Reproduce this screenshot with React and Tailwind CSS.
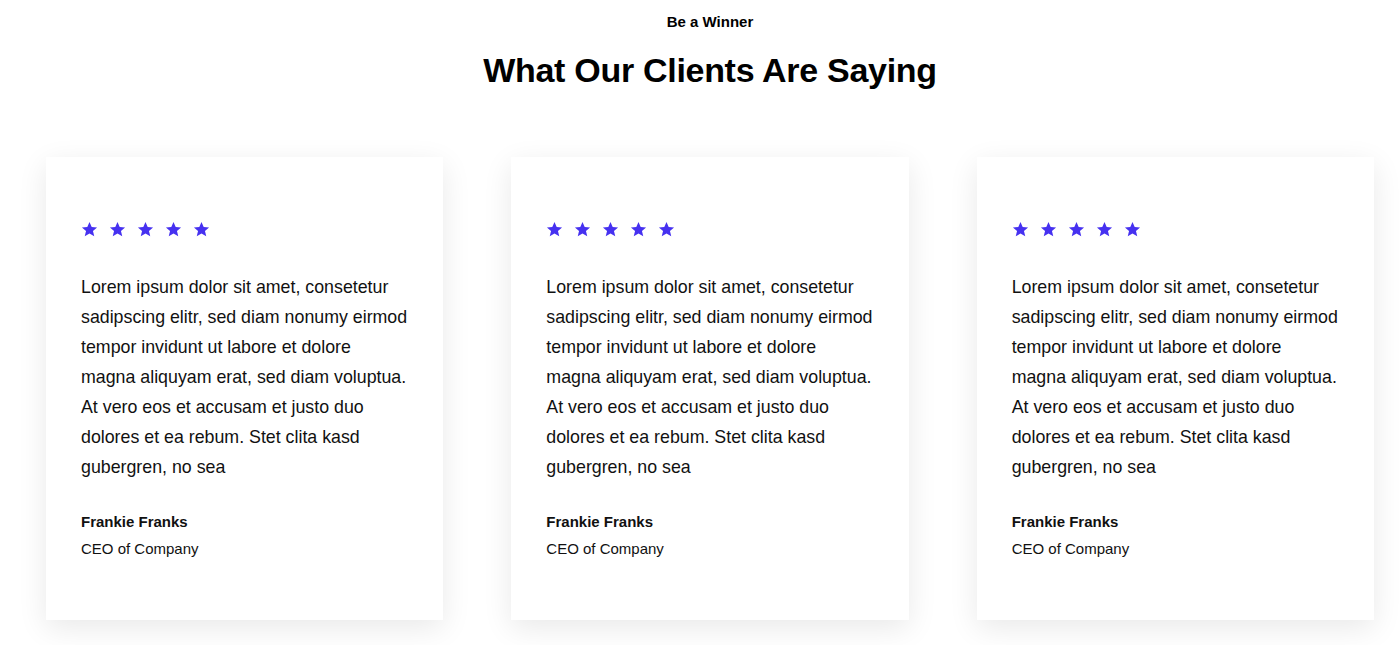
import React from "react";

const lines = [
  "Lorem ipsum dolor sit amet, consetetur",
  "sadipscing elitr, sed diam nonumy eirmod",
  "tempor invidunt ut labore et dolore",
  "magna aliquyam erat, sed diam voluptua.",
  "At vero eos et accusam et justo duo",
  "dolores et ea rebum. Stet clita kasd",
  "gubergren, no sea",
];

function Star() {
  return (
    <svg width="17" height="17" viewBox="0 0 24 24" className="text-[#4631f0]" fill="currentColor">
      <path d="M12 1.5l3.1 7.1 7.6.6-5.8 5 1.8 7.5L12 17.7l-6.7 4 1.8-7.5-5.8-5 7.6-.6z" />
    </svg>
  );
}

function Card() {
  return (
    <div className="bg-white shadow-[0_8px_28px_rgba(0,0,0,0.09)] pl-[35px] pr-[20px] pt-[64px] pb-[61px]">
      <div className="flex gap-[11px]">
        {[0, 1, 2, 3, 4].map((i) => (
          <Star key={i} />
        ))}
      </div>
      <p className="mt-[34px] text-[17.8px] leading-[30px] text-[#111] whitespace-nowrap">
        {lines.map((l, i) => (
          <React.Fragment key={i}>
            {l}
            {i < lines.length - 1 && <br />}
          </React.Fragment>
        ))}
      </p>
      <div className="mt-[30px] text-[15px] font-bold text-[#111] leading-[20px]">Frankie Franks</div>
      <div className="mt-[7px] text-[15px] text-[#111] leading-[20px]">CEO of Company</div>
    </div>
  );
}

export default function App() {
  return (
    <div className="bg-white min-h-[645px] font-['Liberation_Sans',Arial,sans-serif]">
      <div className="w-[1328px] ml-[46px]">
        <div className="pt-[12px] text-center text-[15px] font-bold text-black leading-[20px]">Be a Winner</div>
        <h2 className="mt-[18px] text-center text-[34px] font-bold text-black leading-[40px] tracking-[-0.3px]">
          What Our Clients Are Saying
        </h2>
        <div className="mt-[67px] grid grid-cols-3 gap-[68px]">
          <Card />
          <Card />
          <Card />
        </div>
      </div>
    </div>
  );
}
